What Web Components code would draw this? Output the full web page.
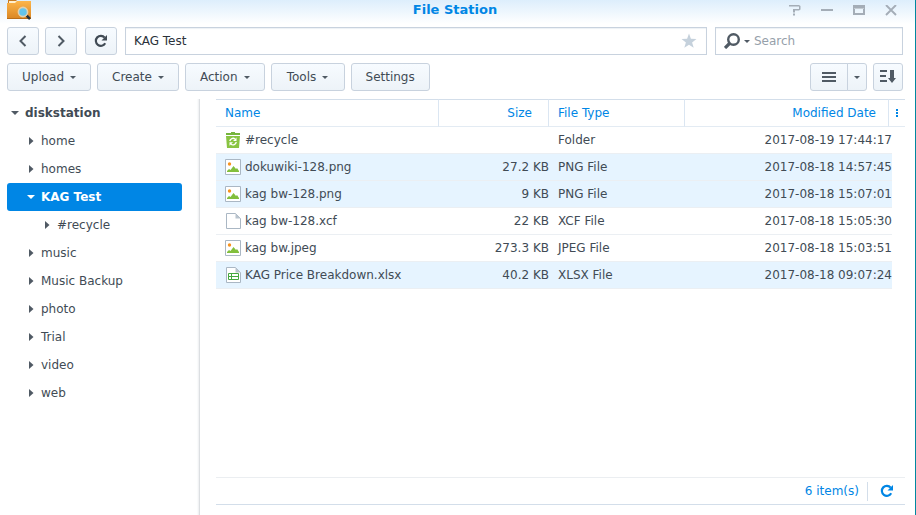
<!DOCTYPE html>
<html lang="en">
<head>
<meta charset="utf-8">
<title>File Station</title>
<style>
  html, body { margin: 0; height: 100%; }
  body {
    background: #0088a0;
    font: 12px/16px Verdana, "DejaVu Sans", sans-serif;
    color: #414b55;
    --line: #c8d2de;
    --accent: #0086e5;
    --ink: #505a64;
  }
</style>
</head>
<body>
<fs-window></fs-window>

<script>
const define = (name, html, setup) => {
  const template = document.createElement('template');
  template.innerHTML = html;
  customElements.define(name, class extends HTMLElement {
    constructor() {
      super();
      this.attachShadow({ mode: 'open' }).append(template.content.cloneNode(true));
    }
    connectedCallback() { if (setup) setup(this, this.shadowRoot); }
  });
};

const icons = {
  app: [24, 20, `<defs><linearGradient id="a" x1="0" y1="0" x2="0" y2="1"><stop offset="0" stop-color="#fdb54a"/><stop offset="1" stop-color="#d98624"/></linearGradient></defs>
    <path d="M1 0H9L11 2H23V6H1z" fill="#c77a22"/><path d="M2 1H22V5H2z" fill="#fff0cf"/>
    <path d="M0 3H8L10 1H24V19H0z" fill="url(#a)"/><path d="M0 18.500H24" stroke="#b96d19"/>
    <path d="M19.500 15.500L23 19" stroke="#25313b" stroke-width="2.500"/><circle cx="16" cy="12" r="4.600" fill="#62c4ec" stroke="#e0cfae" stroke-width="1.600"/>`],
  help: [12, 11, `<path d="M0 0H10L11.500 1V4.500L10 5.500H6V7.500H4V4H10V1.600H0z" fill="#a4adb7"/><path d="M4 8.500H6V10.500H4z" fill="#a4adb7"/>`],
  min: [12, 11, `<path d="M0 5H12" stroke="#a4adb7" stroke-width="2"/>`],
  max: [12, 11, `<path d="M0 0H12V10H0zM2 4V8H10V4z" fill="#a4adb7" fill-rule="evenodd"/><path d="M1 3.500H11" stroke="#c5ccd3"/>`],
  close: [12, 11, `<path d="M1 0L11 10M11 0L1 10" stroke="#a4adb7" stroke-width="1.900"/>`],
  back: [10, 12, `<path d="M7.500 1L2.500 6L7.500 11" fill="none" stroke="#505a64" stroke-width="2"/>`],
  next: [10, 12, `<path d="M2.500 1L7.500 6L2.500 11" fill="none" stroke="#505a64" stroke-width="2"/>`],
  reload: [14, 14, `<path d="M11.200 9.300A5 5 0 1 1 10.700 3.600" fill="none" stroke="currentColor" stroke-width="2.200"/><path d="M13 1V6.500H7.500z" fill="currentColor"/>`],
  star: [16, 16, `<path d="M8 .5L9.900 5.800L15.500 6L11.100 9.400L12.700 14.800L8 11.700L3.300 14.800L4.900 9.400L.5 6L6.100 5.800z" fill="#c5d1dc"/>`],
  search: [16, 16, `<circle cx="9.500" cy="6.500" r="5.300" fill="none" stroke="#505a64" stroke-width="2.400"/><path d="M5.500 10.500L1 15" stroke="#505a64" stroke-width="3.200"/>`],
  caret: [6, 3, `<path d="M0 0H6L3 3z" fill="#505a64"/>`],
  list: [14, 10, `<path d="M0 1H14M0 5H14M0 9H14" stroke="#505a64" stroke-width="2"/>`],
  sort: [16, 14, `<path d="M0 1H7M0 6H6M0 11H7" stroke="#505a64" stroke-width="2"/><path d="M10 0H14V8H16L12 13L8 8H10z" fill="#505a64"/>`],
  down: [9, 8, `<path d="M0 2H8L4 6z" fill="currentColor"/>`],
  right: [9, 8, `<path d="M2 0L6.500 4L2 8z" fill="currentColor"/>`],
  dots: [2, 8, `<path d="M0 0H2V2H0zM0 3H2V5H0zM0 6H2V8H0z" fill="#0086e5"/>`],
  recycle: [16, 16, `<path d="M6 0H10V1H15V3H1V1H6z" fill="#76b53c"/><path d="M1 4H15L14 16H2z" fill="#89c442"/><path d="M4.800 9A3.300 3.300 0 0 1 10 7M11.200 10A3.300 3.300 0 0 1 6 12.200" fill="none" stroke="#fff" stroke-width="1.400"/><path d="M11.500 5.500V9H8zM4.500 13.700V10.200H8z" fill="#fff"/>`],
  image: [16, 16, `<path d="M.5 .5H15.500V15.500H.5z" fill="#fff" stroke="#aab7c4"/><circle cx="4.500" cy="5" r="1.700" fill="#f7931e"/><path d="M2 13V12L4 10L5.500 11L8.500 7L11 10L12 9L14 12V13z" fill="#82bf3c"/>`],
  file: [16, 16, `<path d="M1.500 .5H10.500L15.500 5.500V15.500H1.500z" fill="#fff" stroke="#aab7c4"/><path d="M10.500 .5L15.500 5.500H10.500z" fill="#b9c4ce"/>`],
  sheet: [16, 16, `<path d="M1.500 .5H10.500L15.500 5.500V15.500H1.500z" fill="#fff" stroke="#aab7c4"/><path d="M10.500 .5L15.500 5.500H10.500z" fill="#b9c4ce"/><path d="M3.500 6.500H13.500V12.500H3.500zM3.500 9.500H13.500M6.500 6.500V12.500" fill="none" stroke="#45a83e"/>`]
};

define('fs-icon', `<style>:host{display:inline-flex;flex:none} svg{display:block}</style>`, (host, root) => {
  if (root.querySelector('svg')) return;
  const [w, h, art] = icons[host.getAttribute('name')];
  root.innerHTML += `<svg width="${w}" height="${h}" viewBox="0 0 ${w} ${h}" aria-hidden="true">${art}</svg>`;
});

define('fs-button', `
<style>
  :host { display: flex; flex: none; }
  button {
    box-sizing: border-box; height: 28px; min-width: 74px; width: 100%; margin: 0; padding: 0 14px;
    display: flex; align-items: center; justify-content: center; gap: 6px;
    border: 1px solid var(--line); border-radius: var(--corners, 3px);
    background: linear-gradient(#f7fbff, #edf3f8);
    font: inherit; color: #414b55; white-space: nowrap;
  }
  :host([compact]) button { padding: 0 6px; min-width: 0; }
  :host([nav]) button { padding: 0; width: 32px; min-width: 0; }
</style>
<button type="button"><slot></slot></button>`, (host, root) => {
  const label = host.getAttribute('label');
  if (label) root.querySelector('button').setAttribute('aria-label', label);
});

define('title-bar', `
<style>
  :host { display: grid; grid-template-columns: 1fr auto 1fr; height: 27px; padding: 0 12px 0 7px;
    background: linear-gradient(#ddeefc, #fff 24px); }
  h1 { margin: 0; font: bold 13px/20px Verdana, "DejaVu Sans", sans-serif; color: var(--accent); }
  .controls { display: flex; justify-content: flex-end; gap: 20px; padding: 5px 6px 0 0; align-items: flex-start; }
  button { display: flex; border: 0; padding: 0; background: none; }
</style>
<fs-icon name="app"></fs-icon>
<h1>File Station</h1>
<div class="controls">
  <button aria-label="Help"><fs-icon name="help"></fs-icon></button>
  <button aria-label="Minimize"><fs-icon name="min"></fs-icon></button>
  <button aria-label="Maximize"><fs-icon name="max"></fs-icon></button>
  <button aria-label="Close"><fs-icon name="close"></fs-icon></button>
</div>`);

define('nav-bar', `
<style>
  :host { display: flex; padding: 0 12px 0 7px; gap: 8px; }
  .history { display: flex; gap: 6px; }
  .field { box-sizing: border-box; height: 28px; display: flex; align-items: center;
    border: 1px solid var(--line); background: #fff; box-shadow: inset 0 1px 1px #edf1f5; }
  .path { flex: 1; min-width: 0; padding: 0 9px 0 8px; }
  .search { width: 188px; padding: 0 8px; gap: 4px; }
  input { flex: 1; min-width: 0; border: 0; padding: 0; background: none; outline: 0; font: inherit; color: #2b323a; }
  input::placeholder { color: #96a0aa; opacity: 1; }
  button { display: flex; border: 0; padding: 0; background: none; align-items: center; gap: 4px; }
</style>
<div class="history">
  <fs-button nav label="Back"><fs-icon name="back"></fs-icon></fs-button>
  <fs-button nav label="Forward"><fs-icon name="next"></fs-icon></fs-button>
</div>
<fs-button nav label="Reload"><fs-icon name="reload"></fs-icon></fs-button>
<div class="field path"><input type="text" aria-label="Path" value="KAG Test"><button aria-label="Add to favorites"><fs-icon name="star"></fs-icon></button></div>
<div class="field search"><button aria-label="Search options"><fs-icon name="search"></fs-icon><fs-icon name="caret"></fs-icon></button><input type="text" aria-label="Search" placeholder="Search"></div>`);

define('tool-bar', `
<style>
  :host { display: flex; gap: 6px; padding: 8px 12px 8px 7px; }
  .space { flex: 1; }
  .split { display: flex; }
  .view { --corners: 3px 0 0 3px; width: 38px; }
  .more { --corners: 0 3px 3px 0; width: 20px; margin-left: -1px; }
</style>
<fs-button>Upload <fs-icon name="caret"></fs-icon></fs-button>
<fs-button>Create <fs-icon name="caret"></fs-icon></fs-button>
<fs-button>Action <fs-icon name="caret"></fs-icon></fs-button>
<fs-button>Tools <fs-icon name="caret"></fs-icon></fs-button>
<fs-button>Settings</fs-button>
<div class="space"></div>
<div class="split">
  <fs-button compact class="view" label="List view"><fs-icon name="list"></fs-icon></fs-button>
  <fs-button compact class="more" label="Change view"><fs-icon name="caret"></fs-icon></fs-button>
</div>
<fs-button compact label="Sort"><fs-icon name="sort"></fs-icon></fs-button>`);

define('tree-item', `
<style>
  :host { display: block; }
  button { display: flex; align-items: center; gap: 5px; width: 100%; height: 28px; margin: 0; border: 0; border-radius: 3px;
    padding: 0 4px; background: none; font: inherit; color: inherit; text-align: left; white-space: nowrap; }
  :host([level="1"]) button { padding-left: 20px; }
  :host([level="2"]) button { padding-left: 36px; }
  :host([root]) button, :host([selected]) button { font-weight: bold; }
  :host([selected]) button { background: var(--accent); color: #fff; }
  fs-icon { color: var(--ink); }
  :host([selected]) fs-icon { color: #fff; }
</style>
<button type="button"><span></span><slot></slot></button>`, (host, root) => {
  const icon = document.createElement('fs-icon');
  icon.setAttribute('name', host.hasAttribute('open') ? 'down' : 'right');
  root.querySelector('span').replaceWith(icon);
});

define('folder-tree', `
<style>
  :host { display: block; box-sizing: border-box; padding: 0 17px 0 7px; border-right: 1px solid #dcdfe2; box-shadow: inset -3px 0 2px -2px #eceef0; }
</style>
<nav aria-label="Folders">
  <tree-item root open>diskstation</tree-item>
  <tree-item level="1">home</tree-item>
  <tree-item level="1">homes</tree-item>
  <tree-item level="1" open selected>KAG Test</tree-item>
  <tree-item level="2">#recycle</tree-item>
  <tree-item level="1">music</tree-item>
  <tree-item level="1">Music Backup</tree-item>
  <tree-item level="1">photo</tree-item>
  <tree-item level="1">Trial</tree-item>
  <tree-item level="1">video</tree-item>
  <tree-item level="1">web</tree-item>
</nav>`);

const files = [
  ['recycle', '#recycle', '', 'Folder', '2017-08-19 17:44:17', false],
  ['image', 'dokuwiki-128.png', '27.2 KB', 'PNG File', '2017-08-18 14:57:45', true],
  ['image', 'kag bw-128.png', '9 KB', 'PNG File', '2017-08-18 15:07:01', true],
  ['file', 'kag bw-128.xcf', '22 KB', 'XCF File', '2017-08-18 15:05:30', false],
  ['image', 'kag bw.jpeg', '273.3 KB', 'JPEG File', '2017-08-18 15:03:51', false],
  ['sheet', 'KAG Price Breakdown.xlsx', '40.2 KB', 'XLSX File', '2017-08-18 09:07:24', true]
];

define('file-list', `
<style>
  :host { display: block; flex: 1; }
  table { width: 100%; table-layout: fixed; border-collapse: separate; border-spacing: 0; }
  th, td { box-sizing: border-box; padding: 0 0 0 9px; text-align: left; white-space: nowrap; font-weight: normal; height: 27px; }
  th { height: 28px; color: var(--accent); border-top: 1px solid #d3deea; border-bottom: 1px solid #e3ebf3; border-right: 1px solid #dbe6f2; }
  th:last-child { border-right: 0; padding: 0 0 0 7px; }
  td { border-bottom: 1px solid #ebeff3; }
  td:last-child { border: 0; }
  .size, .date { text-align: right; }
  th.size { padding-right: 16px; }
  th.date { padding-right: 12px; }
  .chosen td:not(:last-child) { background: #e6f4ff; }
  .name { display: flex; align-items: center; gap: 4px; }
  button { display: flex; border: 0; padding: 0; background: none; }
  .c-name { width: auto; } .c-size { width: 110px; } .c-type { width: 136px; }
  .c-date { width: 204px; } .c-gap { width: 3px; } .c-menu { width: 13px; }
</style>
<table>
  <colgroup><col class="c-name"><col class="c-size"><col class="c-type"><col class="c-date"><col class="c-gap"><col class="c-menu"></colgroup>
  <thead><tr><th>Name</th><th class="size">Size</th><th>File Type</th><th class="date">Modified Date</th><th colspan="2"><button aria-label="Columns"><fs-icon name="dots"></fs-icon></button></th></tr></thead>
  <tbody></tbody>
</table>`, (host, root) => {
  root.querySelector('tbody').innerHTML = files.map(([icon, name, size, type, date, chosen]) =>
    `<tr class="${chosen ? 'chosen' : ''}"><td><div class="name"><fs-icon name="${icon}"></fs-icon><span>${name}</span></div></td><td class="size">${size}</td><td>${type}</td><td class="date" colspan="2">${date}</td><td></td></tr>`).join('');
});

define('status-bar', `
<style>
  :host { display: flex; box-sizing: border-box; height: 28px; align-items: center; justify-content: flex-end; gap: 8px;
    border-top: 1px solid #ebeef1; border-bottom: 1px solid #d3deea; color: var(--accent); padding-right: 11px; }
  i { width: 1px; height: 19px; background: #d3deea; }
  button { display: flex; border: 0; padding: 0 0 0 4px; background: none; color: var(--accent); }
</style>
<span>6 item(s)</span><i></i><button aria-label="Refresh"><fs-icon name="reload"></fs-icon></button>`);

define('fs-window', `
<style>
  :host { display: flex; flex-direction: column; box-sizing: border-box; min-height: 100%; margin-right: 1px; background: #fff; }
  main { flex: 1; display: grid; grid-template-columns: 200px 1fr; }
  section { display: flex; flex-direction: column; padding: 0 10px 10px 16px; }
</style>
<title-bar></title-bar>
<nav-bar></nav-bar>
<tool-bar></tool-bar>
<main>
  <folder-tree></folder-tree>
  <section><file-list></file-list><status-bar></status-bar></section>
</main>`);
</script>
</body>
</html>
